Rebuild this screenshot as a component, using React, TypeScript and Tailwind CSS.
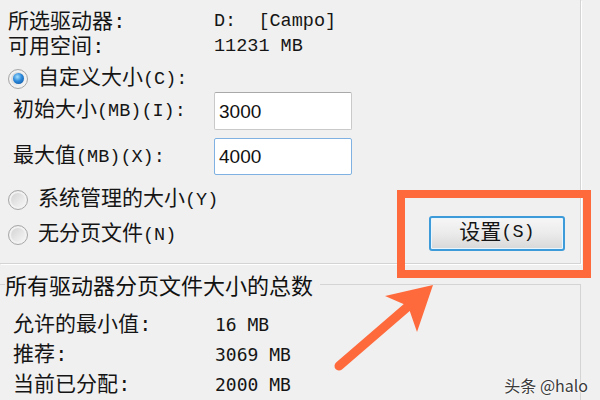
const lbl = "font-['Liberation_Mono','Noto_Sans_CJK_SC',monospace]";
const asc = "text-[18.5px]";

function Radio({ checked }: { checked?: boolean }) {
  return (
    <span className="flex h-[20px] w-[20px] shrink-0 items-center justify-center rounded-full border border-[#a8a8a8] bg-[linear-gradient(135deg,#cfcfcf,#fbfbfb)] shadow-[inset_0_0_0_2px_#f2f2f2]">
      {checked && (
        <span className="h-[11px] w-[11px] rounded-full bg-[radial-gradient(circle_at_40%_35%,#a6e0ff_0%,#2b88da_45%,#0d4d98_100%)]" />
      )}
    </span>
  );
}

function Field({ value, focused }: { value: string; focused?: boolean }) {
  return (
    <div
      className={`flex h-full w-[138px] items-center rounded-[2px] border bg-white pl-[4px] font-['Liberation_Sans',sans-serif] text-[19px] text-[#111] ${
        focused ? 'border-[#7fb2e2]' : 'border-[#c9c9c9] border-t-[#a9a9a9]'
      }`}
    >
      {value}
    </div>
  );
}

export default function App() {
  return (
    <div className={`relative h-[400px] w-[600px] overflow-hidden bg-[#f0f0f0] text-[21px] leading-none text-[#151515] ${lbl}`}>
      {/* upper group */}
      <div className="h-[264px] w-[581px] border-r border-b border-[#d4d4d4] shadow-[1px_1px_0_#ffffff] pt-[10px]">
        <div className="flex h-[25px] items-center pl-[8px]">
          <span className="w-[206px]">所选驱动器:</span>
          <span className={`whitespace-pre ${asc}`}>D:  [Campo]</span>
        </div>
        <div className="flex h-[25px] items-center pl-[8px]">
          <span className="w-[206px]">可用空间:</span>
          <span className={`whitespace-pre ${asc}`}>11231 MB</span>
        </div>

        <div className="mt-[6px] flex h-[25px] items-center gap-[10px] pl-[8px]">
          <Radio checked />
          <span>
            自定义大小<span className={asc}>(C):</span>
          </span>
        </div>

        <div className="mt-[1px] flex h-[38px] items-center pl-[13px]">
          <span className="w-[201px]">
            初始大小<span className={asc}>(MB)(I):</span>
          </span>
          <Field value="3000" />
        </div>
        <div className="mt-[8px] flex h-[37px] items-center pl-[13px]">
          <span className="w-[201px]">
            最大值<span className={asc}>(MB)(X):</span>
          </span>
          <Field value="4000" focused />
        </div>

        <div className="mt-[10px] flex items-end">
          <div className="w-[429px]">
            <div className="flex h-[30px] items-center gap-[10px] pl-[8px]">
              <Radio />
              <span>
                系统管理的大小<span className={asc}>(Y)</span>
              </span>
            </div>
            <div className="mt-[5px] flex h-[30px] items-center gap-[10px] pl-[8px]">
              <Radio />
              <span>
                无分页文件<span className={asc}>(N)</span>
              </span>
            </div>
          </div>
          <button className="mb-[-1px] flex h-[35px] w-[136px] items-center justify-center rounded-[3px] border-2 border-[#3d9bd9] bg-[linear-gradient(#f6f6f6,#ebebeb_50%,#d8d8d8)] shadow-[inset_0_0_0_1px_#eaf6fd]">
            设置<span className={asc}>(S)</span>
          </button>
        </div>
      </div>

      {/* totals group */}
      <fieldset className="mt-[5px] w-[581px] border-t border-r border-[#d4d4d4] pl-[5px]">
        <legend className="pr-[7px] font-['Noto_Sans_CJK_SC',sans-serif] text-[22px] leading-[30px] text-[#111]">
          所有驱动器分页文件大小的总数
        </legend>
        <div className="pt-[11px] pl-[8px]">
          <div className="flex h-[30px] items-center">
            <span className="w-[202px]">允许的最小值:</span>
            <span className="font-['DejaVu_Sans_Mono',monospace] text-[18px]">16 MB</span>
          </div>
          <div className="flex h-[30px] items-center">
            <span className="w-[202px]">推荐:</span>
            <span className="font-['DejaVu_Sans_Mono',monospace] text-[18px]">3069 MB</span>
          </div>
          <div className="flex h-[30px] items-center">
            <span className="w-[202px]">当前已分配:</span>
            <span className="font-['DejaVu_Sans_Mono',monospace] text-[18px]">2000 MB</span>
          </div>
        </div>
      </fieldset>

      {/* annotation */}
      <div className="absolute left-[397px] top-[190px] h-[88px] w-[194px] border-[8px] border-[#ff6a3c]" />
      <svg className="pointer-events-none absolute left-0 top-0" width="600" height="400">
        <line x1="339" y1="366" x2="412" y2="303" stroke="#ff6a3c" strokeWidth="9" strokeLinecap="round" />
        <polygon points="433,285 385,296 408,306 417,332" fill="#ff6a3c" />
      </svg>

      <div className="absolute bottom-[7px] right-[12px] font-['Noto_Sans_CJK_SC',sans-serif] text-[16px] leading-none text-[#3a3a3a] [text-shadow:0_0_2px_#ffffff,0_0_2px_#ffffff]">
        头条 @halo
      </div>
    </div>
  );
}
